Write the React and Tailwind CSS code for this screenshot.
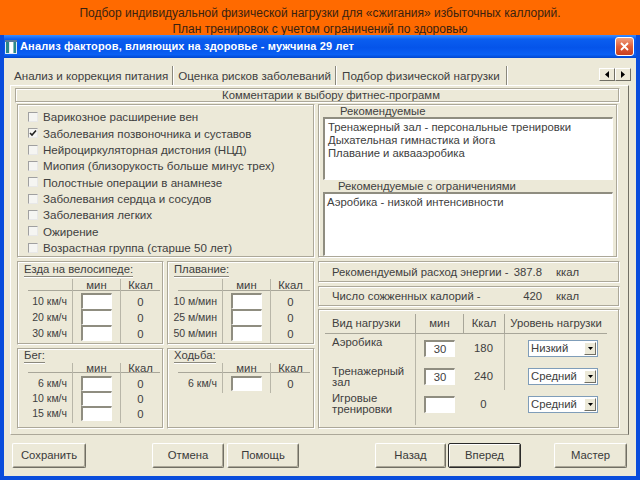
import React from 'react';

const sunken = 'bg-white border-t-2 border-l-2 border-t-[#8f8d80] border-l-[#8f8d80] border-b border-r border-b-white border-r-white';
const etched = 'border border-t-[#aca899] border-l-[#aca899] border-b-white border-r-white shadow-[inset_-1px_-1px_0_#aca899,inset_1px_1px_0_#fff]';

const Checkbox = ({ checked, label }) => (
  <div className="flex h-[16.3px] items-center">
    <div className="ml-[10px] flex h-[10px] w-[10px] items-center justify-center border border-t-[#a0a0a0] border-l-[#a0a0a0] border-b-[#e8e8e8] border-r-[#e8e8e8] bg-[#f5f5f2]">
      {checked && (
        <svg width="8" height="8" viewBox="0 0 8 8">
          <path d="M1 4 L3 6 L7 1.5" stroke="#222" strokeWidth="1.6" fill="none" />
        </svg>
      )}
    </div>
    <span className="ml-[5px] text-[11.6px]">{label}</span>
  </div>
);

// top row cells and bottom row cells have slightly different spacing
const cellSpec = {
  top: { h: 'h-[84px]', titleMt: 'mt-[1px]', colMt: 'mt-[2px]', headH: 'h-[12px] leading-[12px]', rowsMt: 'mt-[2px]', rowH: 'h-[16px] leading-[16px]' },
  bottom: { h: 'h-[81px]', titleMt: 'mt-0', colMt: 'mt-0', headH: 'h-[10px] leading-[10px]', rowsMt: 'mt-[3px]', rowH: 'h-[15px] leading-[15px]' },
};

const ActivityCell = ({ title, rows, top }) => {
  const s = top ? cellSpec.top : cellSpec.bottom;
  return (
    <div className={`flex flex-col ${etched} ${s.h}`}>
      <div className={`ml-[6px] ${s.titleMt} flex`}>
        <span className="h-[14px] border-b border-[#8a887c] leading-[13px] shadow-[0_1px_0_#fff]">{title}</span>
      </div>
      <div className={`flex ${s.colMt}`}>
        <div className="flex w-[54px] flex-col">
          <div className={`${s.headH} ml-[10px] border-b border-[#a8a699]`} />
          <div className={s.rowsMt}>
            {rows.map((r) => (
              <div key={r} className={`${s.rowH} whitespace-nowrap pr-[5px] text-right text-[10.5px]`}>{r}</div>
            ))}
          </div>
        </div>
        <div className="flex w-[48px] flex-col border-l border-[#b8b6a8] pb-[2px]">
          <div className={`${s.headH} border-b border-[#a8a699] text-center`}>мин</div>
          <div className={`${s.rowsMt} flex flex-col items-center`}>
            {rows.map((r) => (
              <div key={r} className={`${s.rowH} w-[31px] ${sunken}`} />
            ))}
          </div>
        </div>
        <div className="flex w-[40px] flex-col border-l border-[#b8b6a8]">
          <div className={`${s.headH} border-b border-[#a8a699] text-center`}>Ккал</div>
          <div className={s.rowsMt}>
            {rows.map((r) => (
              <div key={r} className={`${s.rowH} pt-[1px] text-center`}>0</div>
            ))}
          </div>
        </div>
      </div>
    </div>
  );
};

const Select = ({ value }) => (
  <div className="flex h-[17px] w-[70px] items-center border border-[#7f9db9] bg-white">
    <span className="flex-1 pl-[2px] leading-[15px]">{value}</span>
    <div className="mr-[1px] flex h-[13px] w-[12px] items-center justify-center border border-t-white border-l-white border-b-[#716f64] border-r-[#716f64] bg-[#ece9d8]">
      <svg width="5" height="3" viewBox="0 0 5 3"><path d="M0 0 H5 L2.5 3 Z" fill="#000" /></svg>
    </div>
  </div>
);

const LoadRow = ({ label, min, kcal, level, h, top }) => (
  <div className={`flex ${h}`}>
    <div className={`flex w-[96px] pl-[13px] leading-[11px] ${top ? 'items-start pt-[3px]' : 'items-center'}`}>{label}</div>
    <div className="flex w-[48px] items-center justify-center border-l border-[#b8b6a8]">
      <div className={`flex h-[17px] w-[31px] items-center justify-center leading-[13px] ${sunken}`}>{min}</div>
    </div>
    <div className="flex w-[41px] items-center justify-center">{kcal}</div>
    <div className="flex flex-1 items-center border-l border-[#b8b6a8] pl-[23px]">
      <Select value={level} />
    </div>
  </div>
);

const Btn = ({ children, w, def }) => (
  <div
    className={`flex h-[25px] ${w} items-center justify-center rounded-[2px] bg-[#ece9d8] text-[#3a3a3a] ${
      def
        ? 'border border-[#2a2a2a] shadow-[inset_1px_1px_0_#fff,inset_-1px_-1px_0_#716f64]'
        : 'border border-t-white border-l-white border-b-[#716f64] border-r-[#716f64] shadow-[inset_-1px_-1px_0_#aca899]'
    }`}
  >
    {children}
  </div>
);

export default function App() {
  return (
    <div className="h-[480px] w-[640px] overflow-hidden bg-[#ece9d8] font-['Liberation_Sans',Arial,sans-serif] text-[11.3px] text-[#404040]">
      {/* orange banner */}
      <div className="flex h-[35px] flex-col items-center bg-[#ff6a00] pt-[5px] text-[12px] leading-[16px] text-[#3a2210]">
        <div>Подбор индивидуальной физической нагрузки для «сжигания» избыточных каллорий.</div>
        <div>План тренировок с учетом ограничений по здоровью</div>
      </div>

      {/* window */}
      <div className="flex h-[445px] flex-col border-x-4 border-b-4 border-[#0a4ddc]">
        {/* title bar */}
        <div className="flex h-[23px] items-center bg-[linear-gradient(to_bottom,#3a8cff,#0a5ef0_18%,#0554ea_55%,#0a60f4_85%,#0046cf)] text-white">
          <svg width="12" height="14" viewBox="0 0 12 14" className="ml-[1px]">
            <rect x="0" y="0" width="12" height="14" fill="#dfeaf3" />
            <rect x="1" y="2" width="3" height="11" fill="#2a8a8a" />
            <rect x="5" y="2" width="3" height="11" fill="#ffffff" />
            <rect x="8.5" y="2" width="2.5" height="11" fill="#2a8a8a" />
            <rect x="0" y="0" width="12" height="2" fill="#5a7a9a" />
          </svg>
          <span className="ml-[3px] text-[11px] font-bold tracking-[0.15px]">Анализ факторов, влияющих на здоровье - мужчина 29 лет</span>
          <div className="ml-auto mr-[2px] flex h-[19px] w-[19px] items-center justify-center rounded-[3px] border border-white bg-[linear-gradient(to_bottom,#f0a080,#e0603a_50%,#c84020)]">
            <svg width="9" height="9" viewBox="0 0 9 9"><path d="M1 1 L8 8 M8 1 L1 8" stroke="#fff" strokeWidth="1.8" /></svg>
          </div>
        </div>

        {/* body */}
        <div className="flex flex-1 flex-col bg-[#ece9d8]">
          {/* tabs */}
          <div className="flex h-[27px] items-end text-[11.6px]">
            <div className="ml-[6px] flex h-[19px] items-center border-r border-[#8a887c] pl-[4px] pr-[4px] shadow-[1px_0_0_#fff]">Анализ и коррекция питания</div>
            <div className="flex h-[19px] items-center border-r border-[#8a887c] pl-[5px] pr-[4px] shadow-[1px_0_0_#fff]">Оценка рисков заболеваний</div>
            <div className="flex h-[19px] items-center border-r border-[#8a887c] pl-[6px] pr-[6px] shadow-[1px_0_0_#fff]">Подбор физической нагрузки</div>
            <div className="mb-[4px] ml-auto mr-[5px] flex">
              <div className="flex h-[13px] w-[16px] items-center justify-center border border-t-white border-l-white border-b-[#716f64] border-r-[#716f64]">
                <svg width="4" height="7" viewBox="0 0 4 7"><path d="M4 0 V7 L0 3.5 Z" fill="#000" /></svg>
              </div>
              <div className="flex h-[13px] w-[16px] items-center justify-center border border-t-white border-l-white border-b-[#716f64] border-r-[#716f64]">
                <svg width="4" height="7" viewBox="0 0 4 7"><path d="M0 0 V7 L4 3.5 Z" fill="#000" /></svg>
              </div>
            </div>
          </div>

          {/* tab panel */}
          <div className="ml-[6px] flex h-[350px] w-[619px] flex-col border border-t-white border-l-white border-b-[#aca899] border-r-[#716f64] pl-[4px] pt-[2px]">
            {/* comments group */}
            <div className="flex h-[170px] w-[605px] flex-col">
              <div className={`flex h-[15px] items-center justify-center pl-[27px] ${etched}`}>
                Комментарии к выбору фитнес-программ
              </div>
              <div className="flex flex-1 pl-[2px] pt-[1px]">
                <div className={`flex h-[154px] w-[298px] flex-col pt-[4px] ${etched}`}>
                  <Checkbox label="Варикозное расширение вен" />
                  <Checkbox checked label="Заболевания позвоночника и суставов" />
                  <Checkbox label="Нейроциркуляторная дистония (НЦД)" />
                  <Checkbox label="Миопия (близорукость больше минус трех)" />
                  <Checkbox label="Полостные операции в анамнезе" />
                  <Checkbox label="Заболевания сердца и сосудов" />
                  <Checkbox label="Заболевания легких" />
                  <Checkbox label="Ожирение" />
                  <Checkbox label="Возрастная группа (старше 50 лет)" />
                </div>
                <div className={`ml-[3px] flex h-[154px] w-[300px] flex-col ${etched}`}>
                  <div className="h-[12px] pl-[21px] leading-[12px]">Рекомендуемые</div>
                  <div className={`mx-[4px] flex h-[63px] flex-col pl-[3px] pt-[2px] leading-[13px] ${sunken}`}>
                    <div>Тренажерный зал - персональные тренировки</div>
                    <div>Дыхательная гимнастика и йога</div>
                    <div>Плавание и аквааэробика</div>
                  </div>
                  <div className="h-[12px] pl-[19px] leading-[12px]">Рекомендуемые с ограничениями</div>
                  <div className={`mx-[4px] mb-[1px] flex flex-1 flex-col pl-[2px] pt-[2px] leading-[13px] ${sunken}`}>
                    <div>Аэробика - низкой интенсивности</div>
                  </div>
                </div>
              </div>
            </div>

            {/* lower section */}
            <div className="mt-[3px] flex pl-[2px]">
              <div className="grid w-[298px] grid-cols-[147px_148px] gap-[3px]">
                <ActivityCell top title="Езда на велосипеде:" rows={['10 км/ч', '20 км/ч', '30 км/ч']} />
                <ActivityCell top title="Плавание:" rows={['10 м/мин', '25 м/мин', '50 м/мин']} />
                <ActivityCell title="Бег:" rows={['6 км/ч', '10 км/ч', '15 км/ч']} />
                <ActivityCell title="Ходьба:" rows={['6 км/ч']} />
              </div>

              <div className="ml-[3px] flex w-[302px] flex-col whitespace-nowrap">
                <div className={`flex h-[22px] items-center pl-[13px] pr-[21px] ${etched}`}>
                  <span className="min-w-0 flex-1">Рекомендуемый расход энергии -</span>
                  <span className="w-[40px] text-right">387.8</span>
                  <span className="ml-[14px] w-[42px]">ккал</span>
                </div>
                <div className={`mt-[3px] flex h-[21px] items-center pl-[13px] pr-[21px] ${etched}`}>
                  <span className="min-w-0 flex-1">Число сожженных калорий -</span>
                  <span className="w-[40px] text-right">420</span>
                  <span className="ml-[14px] w-[42px]">ккал</span>
                </div>
                <div className={`mt-[2px] flex h-[120px] flex-col pt-[4px] ${etched}`}>
                  <div className="flex h-[20px] pr-[12px]">
                    <div className="ml-[6px] flex w-[90px] items-center border-b border-[#a8a699] pl-[7px]">Вид нагрузки</div>
                    <div className="flex w-[48px] items-center justify-center border-b border-l border-[#a8a699]">мин</div>
                    <div className="flex w-[41px] items-center justify-center border-b border-l border-[#a8a699]">Ккал</div>
                    <div className="flex flex-1 items-center justify-center border-b border-l border-[#a8a699]">Уровень нагрузки</div>
                  </div>
                  <LoadRow top h="h-[29px]" label="Аэробика" min="30" kcal="180" level="Низкий" />
                  <LoadRow h="h-[27px]" label={<span>Тренажерный<br />зал</span>} min="30" kcal="240" level="Средний" />
                  <div className="flex h-[28px]">
                    <div className="flex w-[96px] items-center pl-[13px] leading-[11px]"><span>Игровые<br />тренировки</span></div>
                    <div className="flex w-[48px] items-center justify-center border-l border-[#b8b6a8]">
                      <div className={`h-[17px] w-[31px] ${sunken}`} />
                    </div>
                    <div className="flex w-[41px] items-center justify-center">0</div>
                    <div className="flex flex-1 items-center pl-[24px]">
                      <Select value="Средний" />
                    </div>
                  </div>
                  <div className="flex h-[7px]">
                    <div className="w-[96px]" />
                    <div className="w-[48px] border-l border-[#b8b6a8]" />
                  </div>
                </div>
              </div>
            </div>
          </div>

          {/* buttons */}
          <div className="mt-[8px] flex">
            <div className="ml-[8px]"><Btn w="w-[74px]">Сохранить</Btn></div>
            <div className="ml-[66px]"><Btn w="w-[72px]">Отмена</Btn></div>
            <div className="ml-[3px]"><Btn w="w-[72px]">Помощь</Btn></div>
            <div className="ml-[76px]"><Btn w="w-[71px]">Назад</Btn></div>
            <div className="ml-[2px]"><Btn def w="w-[73px]">Вперед</Btn></div>
            <div className="ml-[33px]"><Btn w="w-[73px]">Мастер</Btn></div>
          </div>
        </div>
      </div>
    </div>
  );
}
